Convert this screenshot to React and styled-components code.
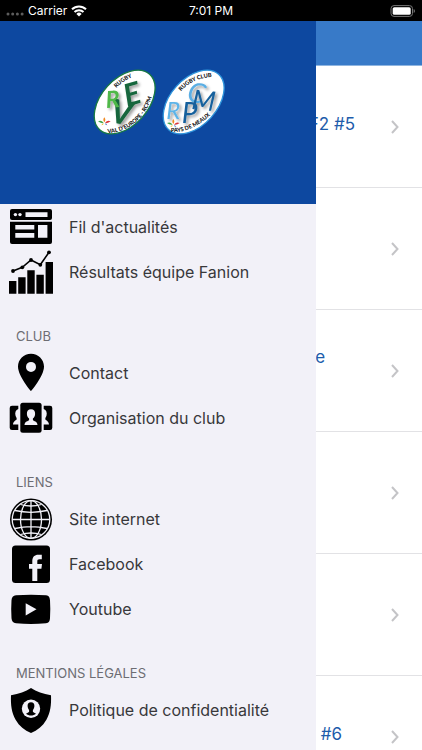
import React from 'react';
import styled, { createGlobalStyle } from 'styled-components';

const GlobalStyle = createGlobalStyle`
  * {
    box-sizing: border-box;
  }

  body {
    margin: 0;
    background-color: #fff;
    font-family: Inter, 'Liberation Sans', sans-serif;
  }
`;

const Screen = styled.div`
  display: flex;
  flex-direction: column;
  height: 100vh;
  overflow: hidden;
`;

const StatusBar = styled.header`
  display: grid;
  grid-template-columns: 1fr auto 1fr;
  align-items: center;
  flex: none;
  height: 21px;
  padding: 0 6px;
  background-color: #000;
  color: #fff;
  font-size: 12px;
  line-height: 20px;
`;

const StatusGroup = styled.div`
  display: flex;
  align-items: center;
  justify-content: ${(props) => (props.$end ? 'flex-end' : 'flex-start')};
  gap: 4px;
`;

const Body = styled.div`
  display: flex;
  flex: 1;
  min-height: 0;
`;

const Drawer = styled.aside`
  flex: none;
  width: 74.9%;
  background-color: #f2f1f8;
  overflow: hidden;
`;

const DrawerHeader = styled.div`
  display: flex;
  align-items: center;
  justify-content: center;
  height: 183px;
  background-color: #0d48a0;
`;

const SectionTitle = styled.h2`
  margin: 0;
  padding: 32px 16px 4px;
  color: #6d6d73;
  font-size: 13px;
  font-weight: 400;
  line-height: 20px;
`;

const MenuList = styled.ul`
  margin: 0;
  padding: 0;
  list-style: none;
`;

const MenuLink = styled.a`
  display: flex;
  align-items: center;
  gap: 16px;
  height: 45px;
  padding-left: 9px;
  color: #38383b;
  font-size: 16px;
  line-height: 22px;
  text-decoration: none;
  white-space: nowrap;
`;

const MenuIcon = styled.svg`
  flex: none;
  width: 44px;
  height: 45px;
  overflow: visible;
`;

const Feed = styled.main`
  flex: 1;
  min-width: 0;
  background-color: #fff;
  overflow: hidden;
`;

const NavBar = styled.div`
  height: 45px;
  background-color: #387ac8;
  border-bottom: 1px solid #8fb5e0;
`;

const FeedRow = styled.a`
  display: flex;
  align-items: center;
  justify-content: space-between;
  height: 122px;
  padding-right: 23px;
  border-bottom: 1px solid #e2e2e5;
  color: #1d5cab;
  font-size: 17px;
  line-height: 22px;
  text-decoration: none;
`;

const FeedTitle = styled.span`
  display: flex;
  justify-content: flex-end;
  width: ${(props) => props.$width}px;
  height: ${(props) => props.$lines * 22}px;
  margin-bottom: 6px;
  overflow: hidden;
  white-space: nowrap;
`;

const NewsIcon = () => (
  <MenuIcon viewBox="0 0 44 45" aria-hidden="true">
    <rect x="1" y="5" width="42" height="11" rx="2" />
    <path d="M1 17.7h42V38a2 2 0 0 1-2 2H3a2 2 0 0 1-2-2z" />
    <g fill="#f2f1f8">
      <circle cx="6.4" cy="10.6" r="1.7" />
      <circle cx="11" cy="10.6" r="1.7" />
      <path d="M16.5 8.3h22V13h-22zM6.3 21h19v4.5h-19zM6.3 29h19v4.7h-19zM29 21h9.4v12.7H29z" />
    </g>
  </MenuIcon>
);

const ChartIcon = () => (
  <MenuIcon viewBox="0 0 44 45" aria-hidden="true">
    <path d="M0 32h7.4v12.7H0zM9.2 28.3h7.4v16.4H9.2zM18.3 21.3h7.4v23.4h-7.4zM27.4 25.7h7.4v19h-7.4zM36.6 13H44v31.7h-7.4z" />
    <path d="M4 22l9.3-3.7L22 11l9.3 4.8L40 3.3" fill="none" stroke="#000" strokeWidth="1.6" />
    <circle cx="4" cy="22" r="1.9" />
    <circle cx="13.3" cy="18.3" r="1.9" />
    <circle cx="22" cy="11" r="1.9" />
    <circle cx="31.3" cy="15.8" r="1.9" />
    <circle cx="40" cy="3.3" r="1.9" />
  </MenuIcon>
);

const PinIcon = () => (
  <MenuIcon viewBox="0 -1 44 45" aria-hidden="true">
    <path
      fillRule="evenodd"
      d="M22 2.7C14.7 2.7 9 8.4 9 15.6 9 25.3 22 40.3 22 40.3S35 25.3 35 15.6C35 8.4 29.3 2.7 22 2.7zM22 10.9a5 5 0 1 1 0 10 5 5 0 0 1 0-10z"
    />
  </MenuIcon>
);

const TeamIcon = () => (
  <MenuIcon viewBox="0 -1 44 45" aria-hidden="true">
    <rect x="11.3" y="6.7" width="21.3" height="30" rx="2.5" />
    <path d="M3 9.7h6.3v3.3c-2.6 1-3.6 3.8-2.8 6.5.4 1.5 1.2 2.2 1.2 3.4 0 1.4-3.4 1.5-3.7 5.6h5.3V34H3a2.3 2.3 0 0 1-2.3-2.3V12A2.3 2.3 0 0 1 3 9.7z" />
    <path d="M41 9.7h-6.3v3.3c2.6 1 3.6 3.8 2.8 6.5-.4 1.5-1.2 2.2-1.2 3.4 0 1.4 3.4 1.5 3.7 5.6h-5.3V34H41a2.3 2.3 0 0 0 2.3-2.3V12A2.3 2.3 0 0 0 41 9.7z" />
    <path
      fill="#f2f1f8"
      d="M22 13.3c-2.8 0-4.3 2-4.1 4.6.1 2 1 3.7 2.2 4.7v1.5c-.8 1.3-4.4 1.2-4.6 4.9h13c-.2-3.7-3.8-3.6-4.6-4.900v-1.500c1.200-1 2.100-2.700 2.200-4.700.2-2.600-1.300-4.600-4.100-4.600z"
    />
  </MenuIcon>
);

const GlobeIcon = () => (
  <MenuIcon viewBox="0 -2 44 45" aria-hidden="true">
    <circle cx="22" cy="21.5" r="21" />
    <g fill="none" stroke="#f2f1f8" strokeWidth="1.3">
      <circle cx="22" cy="21.5" r="18.8" />
      <ellipse cx="22" cy="21.5" rx="10.5" ry="18.8" />
      <path d="M22 2.7v37.6M3.2 21.5h37.600M6 12.500q16 3.600 32 0M6 30.500q16-3.600 32 0" />
      <path d="M11.500 6.500q10.500 3 21 0M11.500 36.500q10.500-3 21 0" />
    </g>
  </MenuIcon>
);

const FacebookIcon = () => (
  <MenuIcon viewBox="0 -2 44 45" aria-hidden="true">
    <rect x="3" y="2.5" width="38" height="37.5" rx="3.5" />
    <path
      fill="#f2f1f8"
      d="M23.3 38V25.7H20V21h3.3v-2.9c0-4.2 2.3-6.4 6-6.4h3.5v4.5h-2.3c-1.800 0-2.200.9-2.200 2.200V21H33l-.6 4.700h-4.100V38z"
    />
  </MenuIcon>
);

const YoutubeIcon = () => (
  <MenuIcon viewBox="0 -2 44 45" aria-hidden="true">
    <path d="M7 7.3q15-1.2 30 0c3 .2 3.7 2.1 4 5q.6 9 0 18c-.3 3-1 4.800-4 5q-15 1.200-30 0c-3-.2-4.200-2-4.500-5q-.6-9 0-18c.3-2.900 1.500-4.800 4.500-5z" />
    <path fill="#f2f1f8" d="M16.700 15.200v12.200l10.800-6.100z" />
  </MenuIcon>
);

const ShieldIcon = () => (
  <MenuIcon viewBox="0 -3 44 45" aria-hidden="true">
    <path d="M22-2c5.500 3.800 12 5.800 20 7.300.4 10-.6 17.200-4.600 24.400C33.700 36 28.500 40.500 22 43 15.500 40.500 10.300 36 6.600 29.700 2.600 22.500 1.600 15.300 2 5.300 10 3.800 16.500 1.800 22-2z" />
    <circle cx="22" cy="18.700" r="9.200" fill="#f2f1f8" />
    <path d="M22 12.200c-2.300 0-3.600 1.600-3.400 3.800.1 1.700.7 3 1.500 3.900v1.900c-.5 1-2.100 1.100-3.100 2 2.700 2.400 7.300 2.400 10 0-1-.9-2.600-1-3.100-2v-1.900c.8-.9 1.400-2.200 1.500-3.900.2-2.200-1.100-3.800-3.400-3.800z" />
  </MenuIcon>
);

const WifiIcon = () => (
  <svg width="16" height="12" viewBox="0 0 16 12" aria-hidden="true">
    <g fill="none" stroke="#fff" strokeWidth="2">
      <path d="M1 4.3a10 10 0 0 1 14 0" />
      <path d="M3.5 7a6.4 6.4 0 0 1 9 0" />
    </g>
    <path fill="#fff" d="M5.4 8.9a3.7 3.7 0 0 1 5.2 0L8 11.6z" />
  </svg>
);

const SignalDots = () => (
  <svg width="18" height="12" viewBox="0 0 18 12" fill="#5d5d5d" aria-hidden="true">
    <circle cx="2" cy="9" r="1.5" />
    <circle cx="6.7" cy="9" r="1.5" />
    <circle cx="11.4" cy="9" r="1.5" />
    <circle cx="16.1" cy="9" r="1.5" />
  </svg>
);

const BatteryIcon = () => (
  <svg width="26" height="12" viewBox="0 0 26 12" aria-hidden="true">
    <rect x="1" y="0.6" width="21.5" height="10.8" rx="3" fill="none" stroke="#777" />
    <rect x="2.7" y="2.2" width="18" height="7.6" rx="1.6" fill="#fff" />
    <path fill="#777" d="M23.7 4v4c1.7-.6 1.7-3.4 0-4z" />
  </svg>
);

const ChevronIcon = () => (
  <svg width="8" height="14" viewBox="0 0 8 14" aria-hidden="true">
    <path d="M1 1L6.500 7 1 13" fill="none" stroke="#c4c4c7" strokeWidth="2" />
  </svg>
);

const Flower = ({ x, y }) => (
  <g transform={`translate(${x} ${y})`}>
    <path d="M0-12q6 8 0 15q-6-7 0-15z" fill="#f08a24" />
    <path d="M-2 5q-9 2-17-5q10-5 17 5z" fill="#3fa648" />
    <path d="M2 5q9 2 17-5q-10-5-17 5z" fill="#d8353b" />
    <path d="M-2 6q-5 1-7 6q7 0 7-6z" fill="#f2c230" />
    <path d="M2 6q5 1 7 6q-7 0-7-6z" fill="#3c78c8" />
  </g>
);

const ClubLogos = () => (
  <svg width="150" height="90" viewBox="-6 22 450 270" role="img" aria-label="Rugby Val d'Europe et Rugby Club Pays de Meaux">
    <defs>
      <path id="valTop" d="M94 82Q116 58 150 46" />
      <path id="valBottom" d="M68 218Q176 208 206 92" />
      <path id="meauxTop" d="M288 92Q325 48 396 48" />
      <path id="meauxBottom" d="M257 214Q320 218 380 160" />
      <filter id="soft" x="-30%" y="-30%" width="170%" height="170%">
        <feDropShadow dx="6" dy="6" stdDeviation="4" floodOpacity="0.4" />
      </filter>
    </defs>

    <ellipse cx="119" cy="124" rx="112" ry="70" transform="rotate(-48 119 124)" fill="#fff" stroke="#187a43" strokeWidth="4" />
    <g fontFamily="Lato, sans-serif" fontStyle="italic" fontWeight="700" filter="url(#soft)">
      <text x="72" y="184" fontSize="100" fill="#17663c" transform="rotate(10 72 184)">V</text>
      <text x="126" y="138" fontSize="92" fill="#17663c" transform="rotate(-16 126 138)">E</text>
      <text x="64" y="142" fontSize="70" fill="#4fb848" transform="rotate(-4 64 142)">R</text>
    </g>
    <g fontFamily="Lato, sans-serif" fontWeight="900" fontSize="17" fill="#151515">
      <text><textPath href="#valTop">RUGBY</textPath></text>
      <text><textPath href="#valBottom">VAL D'EUROPE - RCPM</textPath></text>
    </g>
    <Flower x={58} y={182} />

    <ellipse cx="326" cy="124" rx="112" ry="70" transform="rotate(-48 326 124)" fill="#fff" stroke="#2f95dc" strokeWidth="4" />
    <g fontFamily="Lato, sans-serif" fontStyle="italic" filter="url(#soft)">
      <text x="303" y="120" fontSize="84" fill="#5aaee4" transform="rotate(12 303 120)">C</text>
      <text x="318" y="144" fontSize="82" fill="#15609c" transform="rotate(6 318 144)">M</text>
      <text x="290" y="186" fontSize="84" fill="#15609c">P</text>
      <text x="244" y="174" fontSize="72" fill="#5db4e8">R</text>
    </g>
    <g fontFamily="Lato, sans-serif" fontWeight="900" fontSize="17" fill="#151515">
      <text><textPath href="#meauxTop">RUGBY CLUB</textPath></text>
      <text><textPath href="#meauxBottom">PAYS DE MEAUX</textPath></text>
    </g>
    <Flower x={265} y={187} />
  </svg>
);

const sections = [
  {
    items: [
      { label: "Fil d'actualités", Icon: NewsIcon },
      { label: 'Résultats équipe Fanion', Icon: ChartIcon },
    ],
  },
  {
    title: 'CLUB',
    items: [
      { label: 'Contact', Icon: PinIcon },
      { label: 'Organisation du club', Icon: TeamIcon },
    ],
  },
  {
    title: 'LIENS',
    items: [
      { label: 'Site internet', Icon: GlobeIcon },
      { label: 'Facebook', Icon: FacebookIcon },
      { label: 'Youtube', Icon: YoutubeIcon },
    ],
  },
  {
    title: 'MENTIONS LÉGALES',
    items: [{ label: 'Politique de confidentialité', Icon: ShieldIcon }],
  },
];

// width is the part of each title that stays visible beside the open drawer
const articles = [
  { id: 1, title: 'F2 #5', width: 39, lines: 1 },
  { id: 2, title: '', width: 0, lines: 1 },
  { id: 3, title: 'e', width: 9, lines: 2 },
  { id: 4, title: '', width: 0, lines: 1 },
  { id: 5, title: '', width: 0, lines: 1 },
  { id: 6, title: '#6', width: 26, lines: 1 },
];

export default function App() {
  return (
    <Screen>
      <GlobalStyle />
      <StatusBar>
        <StatusGroup>
          <SignalDots />
          <span>Carrier</span>
          <WifiIcon />
        </StatusGroup>
        <span>7:01 PM</span>
        <StatusGroup $end>
          <BatteryIcon />
        </StatusGroup>
      </StatusBar>
      <Body>
        <Drawer>
          <DrawerHeader>
            <ClubLogos />
          </DrawerHeader>
          <nav>
            {sections.map((section) => (
              <section key={section.title || 'main'}>
                {section.title && <SectionTitle>{section.title}</SectionTitle>}
                <MenuList>
                  {section.items.map(({ label, Icon }) => (
                    <li key={label}>
                      <MenuLink href="#">
                        <Icon />
                        {label}
                      </MenuLink>
                    </li>
                  ))}
                </MenuList>
              </section>
            ))}
          </nav>
        </Drawer>
        <Feed>
          <NavBar />
          {articles.map((article) => (
            <FeedRow key={article.id} href="#" aria-label={article.title || 'Article'}>
              <FeedTitle $width={article.width} $lines={article.lines}>
                {article.title}
              </FeedTitle>
              <ChevronIcon />
            </FeedRow>
          ))}
        </Feed>
      </Body>
    </Screen>
  );
}
